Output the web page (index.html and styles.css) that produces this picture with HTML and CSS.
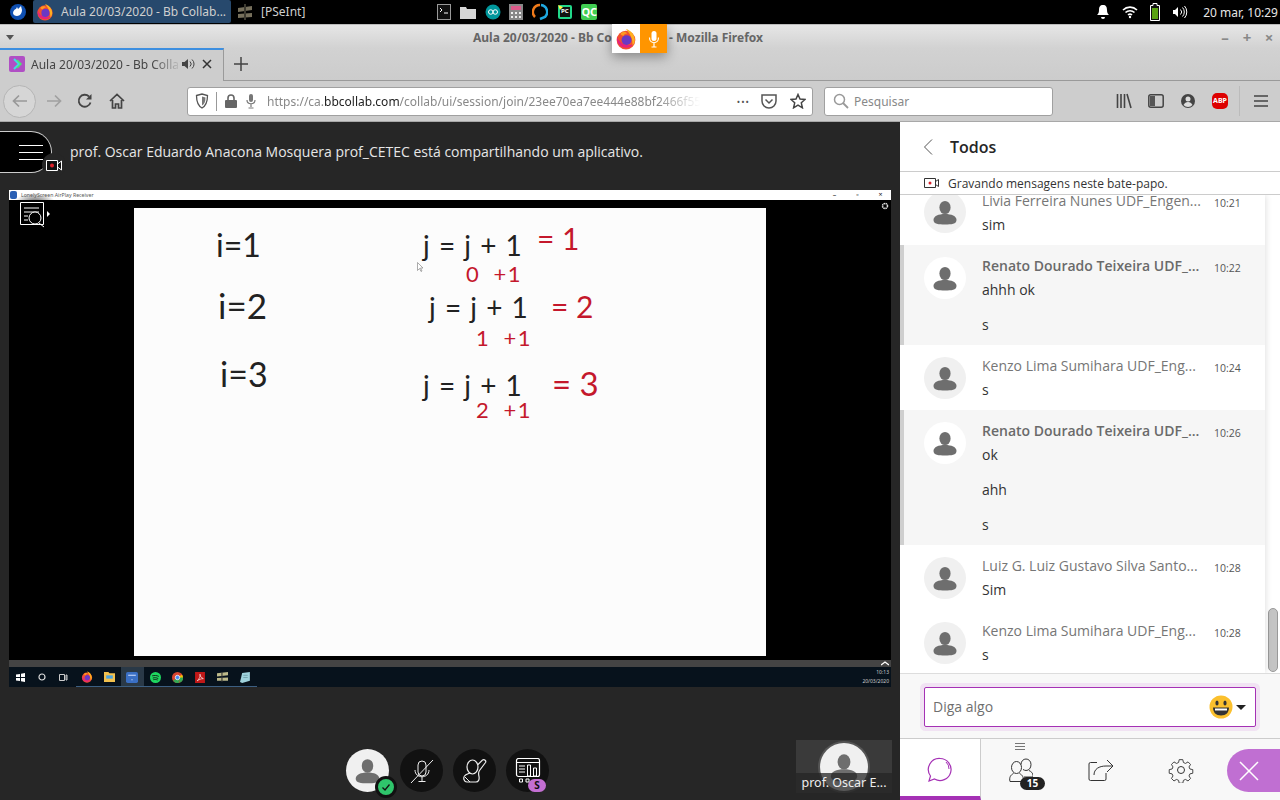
FILE: index.html
```html
<!DOCTYPE html>
<html>
<head>
	<title>Aula 20/03/2020 - Bb Collaborate</title>
	<meta name="viewport" content="width=device-width, initial-scale=1.0">
	<link rel="stylesheet" href="styles.css">
</head>
<body>
	<svg class="defs" width="0" height="0">
		<symbol id="ff" viewBox="0 0 20 20">
			<circle cx="10" cy="11" r="8.5" fill="#f2502e"/>
			<path d="M10 1c4 1 8 5 8 10 0 2-1 4-2 5 0-5-1-9-6-15z" fill="#ffb01f"/>
			<path d="M2 8c-1 5 2 10 8 10 3 0 5-1 6-3-2 1-5 1-7 0C6 14 3 12 2 8z" fill="#e5227b"/>
			<circle cx="10.5" cy="11" r="4.5" fill="#6b38c4"/>
			<path d="M5 5c2-2 5-2 6 0-2 0-3 1-3 2-2 0-3-1-3-2z" fill="#ff9a1f"/>
		</symbol>
		<symbol id="person" viewBox="0 0 42 42">
			<ellipse cx="21" cy="16.5" rx="5.6" ry="6.6" fill="#6e6e6e"/>
			<path d="M9.500 29c0-4 5-6 11.500-6s11.500 2 11.500 6-5 4.500-11.500 4.500S9.500 33 9.500 29z" fill="#6e6e6e"/>
		</symbol>
	</svg>

	<div class="taskbar">
		<svg class="start" width="20" height="20" viewBox="0 0 20 20"><circle cx="10" cy="10" r="8" fill="#0f4fb0"/><path d="M5 11c0-2 2-4 3-4l1-2 1 2 3-3 1 4c0 3-2 6-5 6-2 0-4-1-4-3z" fill="#fff"/></svg>
		<div class="task task-on">
			<svg width="18" height="18"><use href="#ff"/></svg>
			<span>Aula 20/03/2020 - Bb Collab...</span>
		</div>
		<div class="task">
			<svg width="18" height="18" viewBox="0 0 18 18"><path d="M2 5l14-2v4L2 9zM2 11l14-1v4L2 15z" fill="#77705c"/><path d="M8 1h2v16H8z" fill="#3d3a30"/></svg>
			<span>[PSeInt]</span>
		</div>
		<div class="launchers">
			<svg width="14" height="16" viewBox="0 0 14 16"><rect x=".5" y=".5" width="13" height="15" fill="#111" stroke="#999"/><path d="M3 4l2 2-2 2M7 9h4" stroke="#fff" fill="none"/></svg>
			<svg width="16" height="14" viewBox="0 0 16 14"><path d="M0 2h6l1 2h9v10H0z" fill="#d6d6d6"/></svg>
			<svg width="16" height="16" viewBox="0 0 16 16"><circle cx="8" cy="8" r="7.500" fill="#00979c"/><path d="M3.500 8a2 2 0 0 1 4.500 0 2 2 0 0 0 4.500 0 2 2 0 0 0-4.500 0 2 2 0 0 1-4.500 0z" fill="none" stroke="#fff"/></svg>
			<svg width="14" height="16" viewBox="0 0 14 16"><rect width="14" height="16" fill="#888"/><rect x="2" y="2" width="10" height="4" fill="#dd5a8a"/><path d="M2 8h2v2H2zM6 8h2v2H6zM10 8h2v2h-2zM2 12h2v2H2zM6 12h2v2H6zM10 12h2v2h-2z" fill="#eee"/></svg>
			<svg width="16" height="18" viewBox="0 0 16 18"><path d="M8 2a7 7 0 0 0-5 12" fill="none" stroke="#f07a1a" stroke-width="2.500"/><path d="M9 2a7 7 0 0 1 4 12l-5 2" fill="none" stroke="#1fa8e0" stroke-width="2.500"/></svg>
			<svg width="16" height="16" viewBox="0 0 16 16"><rect x="1" y="1" width="14" height="14" rx="2" fill="#21d789"/><rect x="3" y="3" width="10" height="10" fill="#111"/><path d="M1 1l5 2-3 3z" fill="#fcf84a"/><text x="4" y="9" class="mini-pc">PC</text></svg>
			<span class="qc">QC</span>
		</div>
		<div class="tray">
			<svg width="14" height="16" viewBox="0 0 14 16"><path d="M7 1c3 0 4 2 4 5 0 3 1 4 2 5H1c1-1 2-2 2-5 0-3 1-5 4-5zM5 13h4a2 2 0 0 1-4 0z" fill="#fff"/></svg>
			<svg width="16" height="14" viewBox="0 0 16 14"><path d="M1 5a10 10 0 0 1 14 0M3.500 7.500a6.500 6.500 0 0 1 9 0M6 10a3 3 0 0 1 4 0" fill="none" stroke="#fff" stroke-width="1.600"/><circle cx="8" cy="12" r="1.200" fill="#fff"/></svg>
			<svg width="10" height="18" viewBox="0 0 10 18"><path d="M3 .5h4v2h2.500v15H.5v-15H3z" fill="#111" stroke="#fff"/><rect x="2" y="5" width="6" height="11" fill="#5aa312"/></svg>
			<svg class="tray-vol" width="16" height="14" viewBox="0 0 16 14"><path d="M1 5h2l3-3v10L3 9H1z" fill="#fff"/><path d="M8.500 4.500a3.500 3.500 0 0 1 0 5M10.500 2.500a6.500 6.500 0 0 1 0 9M12.500 1a9 9 0 0 1 0 12" fill="none" stroke="#fff"/></svg>
			<span>20 mar, 10:29</span>
		</div>
	</div>

	<div class="titlebar">
		<span class="menu-caret"></span>
		<span class="win-title">Aula 20/03/2020 - Bb Collaborate - Mozilla Firefox</span>
		<div class="win-btns"><span>–</span><span>+</span><span>×</span></div>
	</div>
	<div class="sharing">
		<div class="sharing-ff"><svg width="22" height="22"><use href="#ff"/></svg></div>
		<div class="sharing-mic">
			<svg width="12" height="20" viewBox="0 0 12 20"><rect x="3.500" y="2" width="5" height="10" rx="2.500" fill="#fff"/><path d="M1.500 8.500c0 7 9 7 9 0M6 14v4M3.500 18h5" stroke="#fff" fill="none" stroke-width="1.200"/></svg>
		</div>
	</div>

	<div class="tabstrip">
		<div class="tab">
			<svg width="16" height="16" viewBox="0 0 16 16"><rect width="16" height="16" rx="2" fill="#b04fc4"/><path d="M5 3l5 5-5 5" fill="none" stroke="#3de0e0" stroke-width="2"/><path d="M8 4l4 4-4 4" fill="none" stroke="#4de66e" stroke-width="1.500"/></svg>
			<span class="tab-label">Aula 20/03/2020 - Bb Colla</span>
			<svg class="tab-vol" width="14" height="14" viewBox="0 0 14 14"><path d="M0 5h2.500L6 2v10L2.500 9H0z" fill="#444"/><path d="M8 4.500a3.500 3.500 0 0 1 0 5M10 2.500a6 6 0 0 1 0 9" fill="none" stroke="#444"/></svg>
			<svg class="tab-x" width="12" height="12" viewBox="0 0 12 12"><path d="M2 2l8 8M10 2l-8 8" stroke="#333" stroke-width="1.500"/></svg>
		</div>
		<svg class="new-tab" width="14" height="14" viewBox="0 0 14 14"><path d="M7 0v14M0 7h14" stroke="#444" stroke-width="1.500"/></svg>
	</div>

	<div class="navbar">
		<div class="back"><svg width="16" height="14" viewBox="0 0 16 14"><path d="M15 7H2M7 1.500L1.500 7 7 12.500" fill="none" stroke="#999" stroke-width="1.700"/></svg></div>
		<svg class="nav-fwd" width="16" height="14" viewBox="0 0 16 14"><path d="M1 7h13M9 1.500L14.500 7 9 12.500" fill="none" stroke="#a0a0a0" stroke-width="1.700"/></svg>
		<svg class="nav-reload" width="16" height="16" viewBox="0 0 16 16"><path d="M13.500 9.500A6 6 0 1 1 12 3.500" fill="none" stroke="#444" stroke-width="1.800"/><path d="M14.500 1v5.500H9z" fill="#444"/></svg>
		<svg class="nav-home" width="16" height="16" viewBox="0 0 16 16"><path d="M1 8l7-6.500L15 8M3.500 7v8h3v-4h3v4h3V7" fill="none" stroke="#444" stroke-width="1.700"/></svg>
		<div class="urlbar">
			<svg width="14" height="16" viewBox="0 0 14 16"><path d="M1.500 2.500L7 1l5.500 1.500c0 6-1 10-5.500 12.500C2.500 12.500 1.500 8.500 1.500 2.500z" fill="none" stroke="#555" stroke-width="1.300"/><path d="M7 3.500l3.500 1c0 4-1 6.500-3.500 8z" fill="#777"/></svg>
			<span class="url-sep"></span>
			<svg width="12" height="14" viewBox="0 0 12 14"><path d="M3 6V4a3 3 0 0 1 6 0v2" fill="none" stroke="#666" stroke-width="1.600"/><rect y="6" width="12" height="8" rx="1" fill="#666"/></svg>
			<svg class="url-mic" width="10" height="16" viewBox="0 0 10 16"><rect x="3" y="1" width="4" height="8" rx="2" fill="#777"/><path d="M1 7c0 5 8 5 8 0M5 11v3M2.500 15h5" fill="none" stroke="#777" stroke-width="1.200"/></svg>
			<span class="url-text">https://ca.<b>bbcollab.com</b>/collab/ui/session/join/23ee70ea7ee444e88bf2466f55</span>
			<span class="url-dots">•••</span>
			<svg width="16" height="15" viewBox="0 0 16 15"><path d="M1 1h14v6a7 7 0 0 1-14 0z" fill="none" stroke="#555" stroke-width="1.500"/><path d="M4.500 5.500L8 9l3.500-3.500" fill="none" stroke="#555" stroke-width="1.500"/></svg>
			<svg class="url-star" width="16" height="16" viewBox="0 0 16 16"><path d="M8 1.500l2 4.500 5 .5-3.700 3.300 1.100 5L8 12.200l-4.400 2.600 1.100-5L1 6.500 6 6z" fill="none" stroke="#444" stroke-width="1.500"/></svg>
		</div>
		<div class="searchbar">
			<svg width="16" height="16" viewBox="0 0 16 16"><circle cx="6.500" cy="6.500" r="5" fill="none" stroke="#999" stroke-width="1.500"/><path d="M10 10l5 5" stroke="#999" stroke-width="1.800"/></svg>
			<span>Pesquisar</span>
		</div>
		<div class="toolbar">
			<svg width="16" height="16" viewBox="0 0 16 16"><path d="M1.500 1v14M5 1v14M8.500 1v14M11 1l4 14" stroke="#444" stroke-width="1.600"/></svg>
			<svg width="16" height="14" viewBox="0 0 16 14"><rect x=".8" y=".8" width="14.400" height="12.400" rx="2" fill="none" stroke="#444" stroke-width="1.500"/><rect x="2" y="2" width="5" height="10" fill="#555"/></svg>
			<svg width="16" height="16" viewBox="0 0 16 16"><circle cx="8" cy="8" r="7" fill="#444"/><circle cx="8" cy="6" r="2.500" fill="#ddd"/><path d="M3.500 12c1-2 2.500-3 4.500-3s3.500 1 4.500 3a6 6 0 0 1-9 0z" fill="#ddd"/></svg>
			<span class="abp">ABP</span>
			<span class="tool-sep"></span>
			<svg width="14" height="12" viewBox="0 0 14 12"><path d="M0 1h14M0 6h14M0 11h14" stroke="#444" stroke-width="1.500"/></svg>
		</div>
	</div>

	<div class="session">
		<div class="stage">
			<div class="notice">
				<div class="hamburger">
					<span></span><span></span><span></span>
					<div class="rec-badge"><svg width="17" height="11" viewBox="0 0 17 11"><path d="M.5.500h11v10H.5zM11.500 4l4-3v9l-4-3" fill="#111" stroke="#fff"/><circle cx="6" cy="5.500" r="2" fill="#e0222a"/></svg></div>
				</div>
				<p>prof. Oscar Eduardo Anacona Mosquera prof_CETEC está compartilhando um aplicativo.</p>
			</div>

			<div class="screen">
				<div class="screen-title">
					<span class="screen-logo"></span>
					<span>LonelyScreen AirPlay Receiver</span>
					<span class="screen-ctrl">–</span><span class="screen-ctrl">▫</span><span class="screen-ctrl">×</span>
				</div>
				<div class="screen-view">
					<svg class="zoom-icon" width="32" height="26" viewBox="0 0 32 26"><path d="M.5.500h23v22H.5zM4 6h15M4 10h15M4 14h4M4 18h4" fill="#000" stroke="#fff"/><circle cx="15" cy="16" r="6" fill="#000" stroke="#fff"/><path d="M19 21l5 4" stroke="#fff"/><path d="M27 9l3 3-3 3z" fill="#fff"/></svg>
					<svg class="screen-gear" width="8" height="8" viewBox="0 0 8 8"><circle cx="4" cy="4" r="2.500" fill="none" stroke="#ddd" stroke-width="1.500" stroke-dasharray="1.500 .5"/></svg>
					<div class="board">
						<span class="note n-i1">i=1</span>
						<span class="note n-i2">i=2</span>
						<span class="note n-i3">i=3</span>
						<span class="note eq n-j1">j = j + 1</span>
						<span class="note red n-r1">= 1</span>
						<span class="note red small n-s1">0 +1</span>
						<span class="note eq n-j2">j = j + 1</span>
						<span class="note red n-r2">= 2</span>
						<span class="note red small n-s2">1 +1</span>
						<span class="note eq n-j3">j = j + 1</span>
						<span class="note red n-r3">= 3</span>
						<span class="note red small n-s3">2 +1</span>
						<svg class="board-cursor" width="7" height="10" viewBox="0 0 7 10"><path d="M.5.500v8l2-2 1.500 3 1-.5-1.500-3h2.500z" fill="#fff" stroke="#888" stroke-width=".7"/></svg>
					</div>
				</div>
				<div class="screen-strip"><svg width="8" height="5" viewBox="0 0 8 5"><path d="M0 4l4-3 4 3" fill="none" stroke="#fff" stroke-width="1.400"/></svg></div>
				<div class="wintask">
					<svg class="w-first" width="9" height="9" viewBox="0 0 9 9"><path d="M0 1.500L4 1v3H0zM5 .8L9 0v4H5zM0 5h4v3l-4-.5zM5 5h4v4l-4-.8z" fill="#fff"/></svg>
					<svg width="8" height="8" viewBox="0 0 8 8"><circle cx="4" cy="4" r="3" fill="none" stroke="#ddd" stroke-width="1.200"/></svg>
					<svg width="9" height="7" viewBox="0 0 9 7"><path d="M.5.500h5v6h-5zM7 1h1v5H7z" fill="none" stroke="#ccc"/></svg>
					<div class="wapps">
						<span class="wapp"><svg width="12" height="12"><use href="#ff"/></svg></span>
						<span class="wapp"><svg width="11" height="10" viewBox="0 0 10 9"><path d="M0 0h4l1 1h5v8H0z" fill="#f2c14e"/><path d="M2 3h6v3H2z" fill="#4aa3df"/></svg></span>
						<span class="wapp wapp-on"><svg width="12" height="11" viewBox="0 0 11 10"><rect width="11" height="10" rx="1.500" fill="#3a6fc4"/><path d="M2 3h7M5 7h1" stroke="#cfe0ff"/></svg></span>
						<span class="wapp"><svg width="11" height="11" viewBox="0 0 10 10"><circle cx="5" cy="5" r="5" fill="#1ed760"/><path d="M2 3.500c2-.5 4-.5 6 .5M2.500 5.500c2-.5 3-.5 5 .5M3 7c1.500-.3 2.500-.3 4 .3" stroke="#111" fill="none" stroke-width=".8"/></svg></span>
						<span class="wapp"><svg width="11" height="11" viewBox="0 0 10 10"><circle cx="5" cy="5" r="5" fill="#d8452f"/><path d="M5 5L1 8a5 5 0 0 0 6 1.500zM5 5l2.500 4.500A5 5 0 0 0 9.800 3.500z" fill="#34a853"/><path d="M5 5h5a5 5 0 0 0-1-2.500z" fill="#fbbc05"/><circle cx="5" cy="5" r="2" fill="#4a8af4" stroke="#fff" stroke-width=".7"/></svg></span>
						<span class="wapp"><svg width="10" height="11" viewBox="0 0 9 10"><rect width="9" height="10" fill="#c01818"/><path d="M2 8c2-2 3-4 2.500-6 0 2 1 3 3 4-2 0-4 1-5.500 2z" fill="none" stroke="#fff" stroke-width=".6"/></svg></span>
						<span class="wapp"><svg width="11" height="10" viewBox="0 0 10 9"><path d="M0 1l10-1v3L0 4zM0 5.500L10 5v3H0z" fill="#bdb98a"/><path d="M4 0h1v9H4z" fill="#333"/></svg></span>
						<span class="wapp"><svg width="11" height="11" viewBox="0 0 10 10"><path d="M2 1l7-1v8l-7 2-2-1z" fill="#9fd3dd"/><path d="M3 3h4M3 5h4" stroke="#5f8f99" stroke-width=".6"/></svg></span>
					</div>
					<div class="wclock"><span>10:13</span><span>20/03/2020</span></div>
				</div>
			</div>

			<div class="controls">
				<div class="ctrl ctrl-me">
					<svg width="43" height="43"><use href="#person"/></svg>
					<span class="ok-badge"><svg width="12" height="12" viewBox="0 0 12 12"><path d="M2.500 6.500l2.500 2.500 4.500-5.500" fill="none" stroke="#111" stroke-width="1.300"/></svg></span>
				</div>
				<div class="ctrl">
					<svg width="26" height="26" viewBox="0 0 26 26"><rect x="9" y="3" width="8" height="15" rx="4" fill="none" stroke="#eee"/><path d="M6 12c0 9 14 9 14 0M13 19v4M9.500 23.500h7M2 25L24 2" fill="none" stroke="#eee"/></svg>
				</div>
				<div class="ctrl">
					<svg width="24" height="24" viewBox="0 0 24 24"><ellipse cx="9.500" cy="8" rx="5.500" ry="7" fill="none" stroke="#eee" stroke-width="1.200"/><path d="M14.500 6l5-5c2-1 4 1 3 2.500l-6 8c-1.500 2-1 4-.5 6 .5 3-.5 5.500-3 5.500H4c-3 0-4-4-2.500-6C3 15 5 15 7 14" fill="none" stroke="#eee" stroke-width="1.200"/><path d="M2 18l5 5" stroke="#eee"/></svg>
				</div>
				<div class="ctrl">
					<svg width="26" height="26" viewBox="0 0 26 26"><rect x="1.500" y=".5" width="23" height="18" rx="2" fill="none" stroke="#fff" stroke-width="1.200"/><path d="M2 4.500h22M4 8h6M4 11h6M4 14h6M12.500 7h3v11h-3zM18.500 10h3v8h-3zM4.500 21h3v3h-3zM11 21h3v3h-3z" fill="none" stroke="#fff"/></svg>
					<span class="s-badge">S</span>
				</div>
				<div class="selfview">
					<div class="self-avatar"><svg width="48" height="48"><use href="#person"/></svg></div>
					<span class="self-name">prof. Oscar E...</span>
				</div>
			</div>
		</div>

		<aside class="panel">
			<header class="panel-head">
				<svg width="10" height="16" viewBox="0 0 10 16"><path d="M9 .5L1.500 8 9 15.500" fill="none" stroke="#555"/></svg>
				<h2>Todos</h2>
			</header>
			<div class="rec-note">
				<svg width="16" height="10" viewBox="0 0 16 10"><path d="M.5.500h11v9H.5zM11.500 3.500l3-2v7l-3-2" fill="none" stroke="#333"/><circle cx="6" cy="5" r="1.500" fill="#d9222a"/></svg>
				<span>Gravando mensagens neste bate-papo.</span>
			</div>
			<div class="chat">
				<div class="messages">
					<div class="msg msg-clip">
						<span class="avatar"><svg width="42" height="42"><use href="#person"/></svg></span>
						<div class="msg-body">
							<div class="msg-head"><span class="who">Livia Ferreira Nunes UDF_Engen...</span><time>10:21</time></div>
							<p>sim</p>
						</div>
					</div>
					<div class="msg msg-mod">
						<span class="avatar"><svg width="42" height="42"><use href="#person"/></svg></span>
						<div class="msg-body">
							<div class="msg-head"><span class="who">Renato Dourado Teixeira UDF_...</span><time>10:22</time></div>
							<p>ahhh ok</p>
							<p>s</p>
						</div>
					</div>
					<div class="msg">
						<span class="avatar"><svg width="42" height="42"><use href="#person"/></svg></span>
						<div class="msg-body">
							<div class="msg-head"><span class="who">Kenzo Lima Sumihara UDF_Eng...</span><time>10:24</time></div>
							<p>s</p>
						</div>
					</div>
					<div class="msg msg-mod">
						<span class="avatar"><svg width="42" height="42"><use href="#person"/></svg></span>
						<div class="msg-body">
							<div class="msg-head"><span class="who">Renato Dourado Teixeira UDF_...</span><time>10:26</time></div>
							<p>ok</p>
							<p>ahh</p>
							<p>s</p>
						</div>
					</div>
					<div class="msg">
						<span class="avatar"><svg width="42" height="42"><use href="#person"/></svg></span>
						<div class="msg-body">
							<div class="msg-head"><span class="who">Luiz G. Luiz Gustavo Silva Santo...</span><time>10:28</time></div>
							<p>Sim</p>
						</div>
					</div>
					<div class="msg">
						<span class="avatar"><svg width="42" height="42"><use href="#person"/></svg></span>
						<div class="msg-body">
							<div class="msg-head"><span class="who">Kenzo Lima Sumihara UDF_Eng...</span><time>10:28</time></div>
							<p>s</p>
						</div>
					</div>
				</div>
				<div class="scroll"><span class="thumb"></span></div>
			</div>
			<div class="composer">
				<div class="say">
					<span>Diga algo</span>
					<svg class="emoji" width="24" height="24" viewBox="0 0 24 24"><circle cx="12" cy="12" r="11.500" fill="#fbc02d"/><ellipse cx="8" cy="8" rx="1.600" ry="2.500" fill="#333"/><ellipse cx="16" cy="8" rx="1.600" ry="2.500" fill="#333"/><path d="M4 12.500h16c0 5-3 8-8 8s-8-3-8-8z" fill="#333"/><path d="M6 13.500h12v2H6z" fill="#fff"/></svg>
					<span class="emoji-caret"></span>
				</div>
			</div>
			<nav class="panel-tabs">
				<div class="ptab ptab-on">
					<svg width="26" height="26" viewBox="0 0 26 26"><path d="M13 1.500a11 11 0 1 1-5.500 20.500L2 24l1.500-5A11 11 0 0 1 13 1.500z" fill="none" stroke="#a531b5" stroke-width="1.200"/><path d="M19 5a9 9 0 0 1 3 7" fill="none" stroke="#a531b5"/></svg>
				</div>
				<div class="ptab">
					<span class="grip"></span>
					<svg width="24" height="24" viewBox="0 0 24 24"><ellipse cx="7.500" cy="9.500" rx="5" ry="6" fill="none" stroke="#333"/><path d="M4.500 15.500c-3 1.500-4.500 4-3.500 8h13c1-4-.5-6.500-3.500-8" fill="none" stroke="#333"/><path d="M12 6.500C12 3 14.500 1 17 1s5 2 5 5.500-2 6-5 6c-1 0-2-.5-3-1" fill="none" stroke="#333"/><path d="M20 12.500c2 1 4 2.500 4 5 0 1-1 1.500-2 1.500h-7" fill="none" stroke="#333"/></svg>
					<span class="count">15</span>
				</div>
				<div class="ptab">
					<svg width="26" height="24" viewBox="0 0 26 24"><path d="M18 15v6a1.500 1.500 0 0 1-1.500 1.500h-14A1.500 1.500 0 0 1 1 21V6a1.500 1.500 0 0 1 1.500-1.500H9" fill="none" stroke="#333"/><path d="M6 17c0-6 5-9 12-9h6M19 2l6 6-6 6" fill="none" stroke="#333"/></svg>
				</div>
				<div class="ptab">
					<svg width="26" height="26" viewBox="0 0 26 26"><circle cx="13" cy="13" r="3.500" fill="none" stroke="#333"/><path d="M11 1.500h4l.7 3.200 2.300 1 2.800-1.700 2.800 2.800-1.700 2.800 1 2.300 3.200.7v4l-3.200.7-1 2.300 1.700 2.800-2.800 2.800-2.800-1.700-2.300 1-.7 3.200h-4l-.7-3.200-2.300-1-2.800 1.700-2.800-2.800 1.700-2.800-1-2.300-3.200-.7v-4l3.200-.7 1-2.300-1.700-2.800 2.800-2.800 2.800 1.700 2.300-1z" transform="translate(1.300 1.300) scale(.9)" fill="none" stroke="#333"/></svg>
				</div>
				<div class="close-pill"><svg width="20" height="20" viewBox="0 0 20 20"><path d="M1 1l18 18M19 1L1 19" stroke="#fff" stroke-width="1.500"/></svg></div>
			</nav>
		</aside>
	</div>
</body>
</html>
```

FILE: styles.css
```css
html, body {
	margin: 0;
	padding: 0;
	width: 1280px;
	height: 800px;
	overflow: hidden;
	font-family: "Noto Sans", "Open Sans", sans-serif;
	display: flex;
	flex-direction: column;
	position: relative;
}

svg {
	display: block;
	flex: none;
}

.defs {
	position: absolute;
}

.mini-pc {
	font-size: 6px;
	font-weight: 700;
	fill: #fff;
}

/* desktop panel */
.taskbar {
	height: 24px;
	flex: none;
	background: #000;
	color: #d8d8d8;
	font-size: 12px;
	display: flex;
	align-items: center;
	padding-left: 8px;
}

.start {
	margin-right: 5px;
}

.task {
	display: flex;
	align-items: center;
	gap: 7px;
	height: 23px;
	padding-left: 3px;
	margin-bottom: 1px;
}

.task span {
	color: #cfcfcf;
}

.task-on {
	width: 195px;
	background: #27496d;
	border-radius: 2px;
	margin-right: 2px;
}

.launchers {
	margin-left: 132px;
	display: flex;
	align-items: center;
	width: 160px;
	justify-content: space-between;
}

.qc {
	background: #41cd52;
	color: #fff;
	font-size: 11px;
	font-weight: 700;
	width: 16px;
	height: 16px;
	line-height: 16px;
	text-align: center;
	border-radius: 2px;
}

.tray {
	margin-left: auto;
	display: flex;
	align-items: center;
	gap: 12px;
	padding-right: 2px;
	color: #e6e6e6;
}

.tray-vol {
	margin-right: 3px;
}

/* firefox window */
.titlebar {
	height: 24px;
	flex: none;
	background: linear-gradient(#e6e6e6, #d2d2d2);
	border-top: 1px solid #bbb;
	box-sizing: border-box;
	display: flex;
	align-items: center;
	position: relative;
	justify-content: center;
	padding-top: 2px;
}

.menu-caret {
	position: absolute;
	left: 6px;
	top: 10px;
	border: 4px solid transparent;
	border-top: 5px solid #555;
}

.win-title {
	font-size: 12px;
	font-weight: 700;
	color: #666;
	margin-right: 44px;
}

.win-btns {
	position: absolute;
	right: 0;
	top: 3px;
	display: flex;
	color: #888;
	font-size: 15px;
	font-weight: 700;
	line-height: 18px;
}

.win-btns span {
	width: 22px;
	text-align: center;
}

.sharing {
	position: absolute;
	left: 612px;
	top: 24px;
	height: 29px;
	display: flex;
	box-shadow: 0 4px 12px rgba(0, 0, 0, .35);
}

.sharing-ff {
	width: 28px;
	background: #fff;
	display: flex;
	align-items: center;
	justify-content: center;
}

.sharing-mic {
	width: 27px;
	background: #ff9500;
	display: flex;
	align-items: center;
	justify-content: center;
}

.tabstrip {
	height: 33px;
	flex: none;
	background: linear-gradient(#d2d2d2, #cccccc);
	box-sizing: border-box;
	border-bottom: 1px solid #9a9a9a;
	display: flex;
	align-items: center;
}

.tab {
	width: 224px;
	height: 33px;
	box-sizing: border-box;
	border-top: 2px solid #3d8fe0;
	border-right: 1px solid #9a9a9a;
	background: #cdcdcd;
	display: flex;
	align-items: center;
	padding: 0 0 2px 9px;
	font-size: 12px;
	color: #444;
}

.tab-label {
	margin-left: 6px;
	width: 151px;
	white-space: nowrap;
	overflow: hidden;
	-webkit-mask-image: linear-gradient(90deg, #000 80%, transparent);
	mask-image: linear-gradient(90deg, #000 80%, transparent);
}

.tab-x {
	margin-left: 5px;
}

.new-tab {
	margin-left: 10px;
}

.navbar {
	height: 41px;
	flex: none;
	box-sizing: border-box;
	background: #cdcdcd;
	border-bottom: 1px solid #a8a8a8;
	display: flex;
	align-items: center;
	padding-left: 4px;
}

.back {
	width: 31px;
	height: 31px;
	border-radius: 50%;
	border: 1px solid #b5b5b5;
	background: #d6d6d6;
	display: flex;
	align-items: center;
	justify-content: center;
	margin-left: -1px;
}

.nav-fwd {
	margin-left: 10px;
}

.nav-reload {
	margin-left: 15px;
}

.nav-home {
	margin-left: 16px;
}

.urlbar {
	margin-left: 62px;
	width: 626px;
	height: 29px;
	box-sizing: border-box;
	background: #fff;
	border: 1px solid #a0a0a0;
	border-radius: 3px;
	display: flex;
	align-items: center;
	padding: 0 6px 0 7px;
	font-size: 12px;
}

.url-sep {
	width: 1px;
	height: 19px;
	background: #999;
	margin: 0 8px 0 7px;
}

.url-mic {
	margin-left: 9px;
}

.url-text {
	width: 433px;
	margin-left: 11px;
	white-space: nowrap;
	overflow: hidden;
	color: #888;
	-webkit-mask-image: linear-gradient(90deg, #000 90%, transparent);
	mask-image: linear-gradient(90deg, #000 90%, transparent);
}

.url-text b {
	font-weight: 400;
	color: #222;
}

.url-dots {
	color: #555;
	font-size: 9px;
	letter-spacing: 1px;
	margin-left: auto;
	margin-right: 11px;
}

.url-star {
	margin-left: 13px;
}

.searchbar {
	margin-left: 11px;
	width: 229px;
	height: 29px;
	box-sizing: border-box;
	background: #fff;
	border: 1px solid #a0a0a0;
	border-radius: 3px;
	display: flex;
	align-items: center;
	gap: 5px;
	padding-left: 8px;
	font-size: 12px;
	color: #888;
}

.toolbar {
	flex: 1;
	display: flex;
	align-items: center;
	padding-left: 63px;
}

.toolbar svg:nth-child(2),
.toolbar svg:nth-child(3) {
	margin-left: 16px;
}

.abp {
	width: 16px;
	height: 16px;
	margin-left: 16px;
	border-radius: 5px;
	background: #d00;
	color: #fff;
	font-size: 7px;
	font-weight: 700;
	line-height: 16px;
	text-align: center;
}

.tool-sep {
	width: 1px;
	height: 30px;
	background: #bbb;
	margin: 0 14px 0 11px;
}

/* collaborate session */
.session {
	flex: 1;
	display: flex;
	min-height: 0;
}

.stage {
	width: 900px;
	background: #262626;
	display: flex;
	flex-direction: column;
}

.notice {
	height: 68px;
	flex: none;
	display: flex;
	align-items: flex-start;
}

.notice p {
	margin: 20px 0 0 18px;
	color: #e6e6e6;
	font-family: "Open Sans", sans-serif;
	font-size: 14px;
	line-height: 20px;
}

.hamburger {
	width: 52px;
	height: 42px;
	margin-top: 9px;
	box-sizing: border-box;
	background: #000;
	border: 1px solid #ccc;
	border-left: none;
	border-radius: 0 21px 21px 0;
	display: flex;
	flex-direction: column;
	justify-content: center;
	align-items: flex-end;
	gap: 6px;
	padding-right: 8px;
	position: relative;
}

.hamburger span {
	width: 24px;
	height: 1px;
	background: #fff;
}

.rec-badge {
	position: absolute;
	left: 42px;
	top: 21px;
	width: 24px;
	height: 24px;
	border-radius: 50%;
	background: #262626;
	display: flex;
	align-items: center;
	justify-content: center;
}

.screen {
	margin: 0 9px;
	height: 497px;
	flex: none;
	display: flex;
	flex-direction: column;
	background: #000;
}

.screen-title {
	height: 10px;
	flex: none;
	background: radial-gradient(ellipse 20px 9px at 26px 12px, #666, transparent) #fff;
	display: flex;
	align-items: center;
	gap: 2px;
	font-size: 5.200px;
	color: #555;
	padding-left: 1px;
}

.screen-logo {
	width: 7px;
	height: 8px;
	background: #2a5fb4;
	border-radius: 2px;
	margin-right: 2px;
}

.screen-ctrl {
	width: 21px;
	text-align: center;
	color: #222;
	font-size: 7px;
	line-height: 10px;
}

.screen-title span:nth-child(2) {
	margin-right: auto;
}

.screen-view {
	flex: 1;
	background: #000;
	padding: 8px 125px 4px;
	position: relative;
}

.zoom-icon {
	position: absolute;
	left: 11px;
	top: 2px;
}

.screen-gear {
	position: absolute;
	right: 2px;
	top: 2px;
}

.board {
	height: 448px;
	background: #fcfcfc;
	position: relative;
	overflow: hidden;
}

.board-cursor {
	position: absolute;
	left: 283px;
	top: 54px;
}

.note {
	position: absolute;
	font-family: "Lato", sans-serif;
	font-size: 30px;
	line-height: 32px;
	color: #222;
	white-space: nowrap;
}

.eq {
	font-size: 28px;
	word-spacing: 2px;
}

.red {
	color: #c4182c;
}

.small {
	font-size: 22px;
	letter-spacing: 1.500px;
	word-spacing: 6px;
}

.n-i1 { left: 82px; top: 21px; font-size: 32px; }
.n-i2 { left: 84px; top: 81px; font-size: 35px; }
.n-i3 { left: 86px; top: 150px; font-size: 34px; }
.n-j1 { left: 289px; top: 21px; }
.n-r1 { left: 403px; top: 14px; }
.n-s1 { left: 332px; top: 50px; }
.n-j2 { left: 295px; top: 83px; }
.n-r2 { left: 417px; top: 82px; }
.n-s2 { left: 342px; top: 114px; }
.n-j3 { left: 289px; top: 161px; }
.n-r3 { left: 418px; top: 159px; font-size: 33px; }
.n-s3 { left: 342px; top: 186px; }

.screen-strip {
	height: 7px;
	flex: none;
	background: #444;
	display: flex;
	align-items: center;
	justify-content: flex-end;
	padding-right: 2px;
}

.wintask {
	height: 20px;
	flex: none;
	background: #07121c;
	display: flex;
	align-items: center;
	padding-left: 7px;
	gap: 13px;
}

.wapps {
	display: flex;
	align-items: center;
	height: 20px;
	margin-left: -5px;
}

.wapp {
	width: 22.600px;
	height: 20px;
	display: flex;
	align-items: center;
	justify-content: center;
	box-shadow: inset 0 -1px 0 #3c5f82;
}

.wapp-on {
	background: #2a3947;
}

.wclock {
	margin-left: auto;
	padding-right: 2px;
	display: flex;
	flex-direction: column;
	align-items: flex-end;
	font-size: 5px;
	line-height: 9px;
	color: #ccc;
}

.controls {
	flex: 1;
	display: flex;
	gap: 10px;
	padding: 9px 8px 0 346px;
	position: relative;
	margin-top: 53px;
}

.ctrl {
	width: 43px;
	height: 43px;
	border-radius: 50%;
	background: #111;
	display: flex;
	align-items: center;
	justify-content: center;
	position: relative;
}

.ctrl-me {
	background: #f0f0f0;
	margin-right: 1px;
}

.ok-badge {
	position: absolute;
	left: 29px;
	top: 27px;
	width: 16px;
	height: 16px;
	border-radius: 50%;
	background: #2fc56b;
	border: 3px solid #111;
	display: flex;
	align-items: center;
	justify-content: center;
}

.s-badge {
	position: absolute;
	left: 22px;
	top: 30px;
	width: 18px;
	height: 13px;
	border-radius: 7px;
	background: #c36fd2;
	color: #111;
	font-size: 10px;
	font-weight: 700;
	line-height: 13px;
	text-align: center;
}

.selfview {
	position: absolute;
	left: 796px;
	top: 0;
	width: 96px;
	height: 53px;
	background: #3a3a3a;
}

.self-avatar {
	position: absolute;
	left: 24px;
	top: 3px;
	width: 48px;
	height: 48px;
	border-radius: 50%;
	background: #f0f0f0;
	box-shadow: 0 0 0 2px #555;
}

.self-name {
	position: absolute;
	left: 0;
	right: 0;
	bottom: 0;
	height: 20px;
	background: rgba(38, 38, 38, .75);
	color: #eee;
	font-size: 12.500px;
	line-height: 20px;
	text-align: center;
}

/* chat panel */
.panel {
	width: 380px;
	background: #fff;
	display: flex;
	flex-direction: column;
	color: #333;
}

.panel-head {
	height: 50px;
	flex: none;
	box-sizing: border-box;
	border-bottom: 1px solid #ccc;
	display: flex;
	align-items: center;
	padding-left: 23px;
	gap: 17px;
}

.panel-head h2 {
	margin: 0;
	font-family: "Open Sans", sans-serif;
	font-size: 16px;
	font-weight: 600;
	color: #262626;
}

.rec-note {
	height: 23px;
	flex: none;
	box-sizing: border-box;
	border-bottom: 1px solid #ccc;
	display: flex;
	align-items: center;
	gap: 8px;
	padding-left: 24px;
	font-family: "Open Sans", sans-serif;
	font-size: 12px;
	color: #333;
}

.chat {
	height: 478px;
	flex: none;
	display: flex;
	overflow: hidden;
}

.messages {
	width: 365px;
	flex: none;
	box-shadow: 1px 0 6px rgba(0, 0, 0, .12);
	position: relative;
}

.msg {
	display: flex;
	padding: 10px 0 10px 24px;
	gap: 16px;
}

.msg-clip {
	margin-top: -15px;
}

.msg-clip .avatar {
	margin-top: 1px;
}

.msg-mod {
	background: #f6f6f6;
	border-left: 4px solid #cfcfcf;
	padding-left: 20px;
}

.avatar {
	width: 42px;
	height: 42px;
	margin-top: 2px;
	border-radius: 50%;
	background: #f0f0f0;
	flex: none;
}

.msg-mod .avatar {
	background: #fff;
}

.msg-body {
	flex: 1;
	min-width: 0;
	font-family: "Open Sans", sans-serif;
}

.msg-head {
	display: flex;
	align-items: center;
	height: 20px;
	margin-bottom: 5px;
}

.who {
	width: 218px;
	font-size: 14px;
	color: #767676;
	white-space: nowrap;
}

.msg-mod .who {
	font-weight: 600;
	color: #6a6a6a;
}

time {
	margin: 5px 0 0 14px;
	font-size: 10.500px;
	color: #555;
}

.msg p {
	margin: 15px 0 0;
	font-size: 14px;
	line-height: 20px;
	color: #333;
}

.msg-head + p {
	margin-top: 0;
}

.scroll {
	flex: 1;
	background: #fff;
	display: flex;
	flex-direction: column;
	align-items: center;
	justify-content: flex-end;
}

.thumb {
	width: 10px;
	height: 64px;
	margin-bottom: 1px;
	box-sizing: border-box;
	background: #c4c4c4;
	border: 1px solid #999;
	border-radius: 5px;
}

.composer {
	height: 66px;
	flex: none;
	box-sizing: border-box;
	background: #f8f8f8;
	border-top: 1px solid #ddd;
	border-bottom: 1px solid #ccc;
	padding: 13px 24px 0;
}

.say {
	height: 40px;
	box-sizing: border-box;
	background: #fff;
	border: 1px solid #a531b5;
	box-shadow: 0 0 0 4px #f1e3f3;
	border-radius: 2px;
	display: flex;
	align-items: center;
	padding: 0 9px 2px 8px;
	font-family: "Open Sans", sans-serif;
	font-size: 14px;
	color: #6f6f6f;
}

.emoji {
	margin: 2px 0 0 auto;
}

.emoji-caret {
	margin: 3px 0 0 3px;
	border: 5px solid transparent;
	border-top: 5px solid #222;
	border-bottom: none;
}

.panel-tabs {
	flex: 1;
	display: flex;
	background: #f8f8f8;
	position: relative;
}

.ptab {
	width: 80px;
	display: flex;
	align-items: center;
	justify-content: center;
	position: relative;
}

.ptab-on {
	background: #fff;
	box-sizing: border-box;
	width: 81px;
	border-right: 1px solid #ccc;
	border-bottom: 4px solid #a531b5;
	padding-top: 4px;
}

.grip {
	position: absolute;
	top: 4px;
	left: 34px;
	width: 10px;
	height: 5px;
	border-top: 1px solid #777;
	border-bottom: 1px solid #777;
	background: linear-gradient(#777, #777) center / 100% 1px no-repeat;
}

.count {
	position: absolute;
	left: 39px;
	top: 38px;
	width: 25px;
	height: 13px;
	border-radius: 7px;
	background: #222;
	color: #fff;
	font-size: 10px;
	font-weight: 700;
	line-height: 13px;
	text-align: center;
}

.close-pill {
	position: absolute;
	right: 0;
	top: 10px;
	width: 53px;
	height: 43px;
	border-radius: 22px 0 0 22px;
	background: #c06fd2;
	display: flex;
	align-items: center;
	justify-content: center;
	padding-right: 9px;
	box-sizing: border-box;
}
```
